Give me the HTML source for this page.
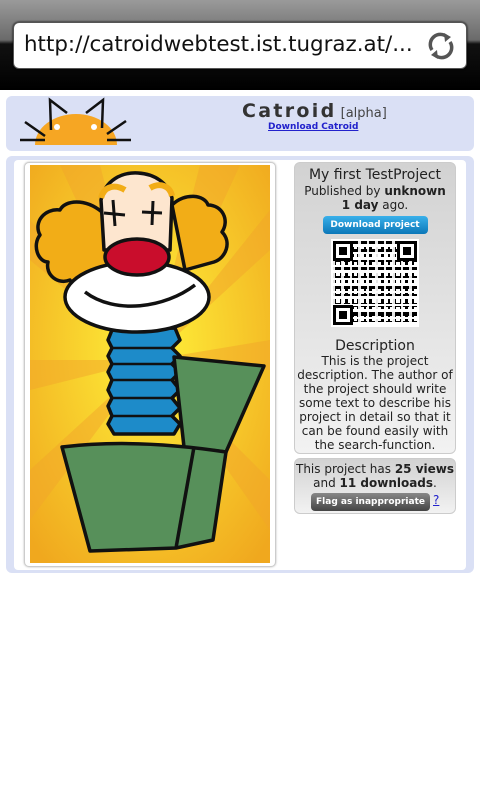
<!DOCTYPE html>
<html><head><meta charset="utf-8"><style>
*{margin:0;padding:0;box-sizing:border-box}
body{width:480px;height:800px;background:#fff;font-family:"DejaVu Sans","Liberation Sans",sans-serif;position:relative;overflow:hidden}
.top{position:absolute;left:0;top:0;width:480px;height:90px;background:linear-gradient(#9a9a9a 0,#6a6a6a 40px,#111 44px,#000 90px)}
.url{position:absolute;left:13px;top:22px;width:454px;height:47px;background:#fff;border:1px solid #555;border-radius:6px;box-shadow:0 0 2px #000}
.url span{position:absolute;left:10px;top:9px;font-size:21.4px;color:#111;font-family:"DejaVu Sans",sans-serif;white-space:nowrap}
.hdr{position:absolute;left:6px;top:96px;width:468px;height:55px;background:#dae0f5;border-radius:6px}
.main{position:absolute;left:6px;top:156px;width:468px;height:417px;background:#dae0f5;border-radius:6px}
.inner{position:absolute;left:14px;top:160px;width:452px;height:410px;background:#fff;border-radius:4px}
.frame{position:absolute;left:24px;top:162px;width:252px;height:405px;border:1px solid #ccc;border-radius:5px;background:#fff;box-shadow:0 0 2px #bbb}
.box{position:absolute;left:294px;width:162px;border:1px solid #ccc;border-radius:6px;background:linear-gradient(#d2d2d2,#f2f2f2);text-align:center;color:#222;font-size:12px;line-height:14px}
b{font-weight:bold}
.btn{display:block;margin:0 auto;border-radius:4px;color:#fff;font-size:9px;font-weight:bold;height:18px;line-height:18px}
.qr{position:absolute;left:331px;top:239px;width:88px;height:88px;background:#fff}
.qrin{position:absolute;left:2px;top:2px;width:84px;height:84px;
background:
repeating-linear-gradient(0deg,#fff 0 3px,transparent 3px 6px,#fff 6px 8px,transparent 8px 13px),
repeating-linear-gradient(90deg,#000 0 3px,transparent 3px 7px,#000 7px 9px,transparent 9px 12px),
repeating-linear-gradient(0deg,#000 0 4px,transparent 4px 9px),
#fff}
.qrin2{position:absolute;inset:0;background:repeating-linear-gradient(90deg,#fff 0 2px,transparent 2px 8px,#fff 8px 11px,transparent 11px 17px);opacity:.9}
.fp{position:absolute;width:20px;height:20px;border:3px solid #000;background:#fff}
.fp::after{content:"";position:absolute;left:3px;top:3px;width:8px;height:8px;background:#000}
</style></head><body>
<div class="top"></div>
<div class="url"><span>http://catroidwebtest.ist.tugraz.at/...</span>
<svg style="position:absolute;left:413px;top:9px" width="28" height="28" viewBox="0 0 28 28"><path d="M5 18 A10 10 0 0 1 20 5" stroke="#555" stroke-width="3.5" fill="none"/><path d="M23 10 A10 10 0 0 1 8 23" stroke="#555" stroke-width="3.5" fill="none"/><path d="M17 1 L24 5 L18 10Z M11 27 L4 23 L10 18Z" fill="#555"/></svg></div>
<div class="hdr"></div>
<svg style="position:absolute;left:0;top:96px" width="140" height="55" viewBox="0 96 140 55">
<path d="M35 145 A41 31 0 0 1 117 145Z" fill="#f6a623"/>
<circle cx="57" cy="127" r="3" fill="#fff"/><circle cx="94" cy="127" r="3" fill="#fff"/>
<path d="M51 130 L50 100 L67 113 M86 113 L103 100 L102 128 M25 122 L45 136 M20 140 L45 140 M126 121 L107 134 M131 140 L107 140" stroke="#111" stroke-width="2.5" fill="none"/>
</svg>
<div style="position:absolute;left:242px;top:100px;font-size:19px;font-weight:bold;letter-spacing:2.3px;color:#333">Catroid<span style="font-size:13px;font-weight:normal;letter-spacing:0;color:#444"> [alpha]</span></div>
<div style="position:absolute;left:268px;top:122px;font-size:9px;font-weight:bold;color:#22c;text-decoration:underline">Download Catroid</div>
<div class="main"></div><div class="inner"></div>
<div class="frame"></div>
<svg style="position:absolute;left:30px;top:165px" width="240" height="398" viewBox="30 165 240 398">
<defs><radialGradient id="g" cx="0.5" cy="0.45" r="0.7"><stop offset="0" stop-color="#fff23a"/><stop offset="1" stop-color="#f0a81e"/></radialGradient></defs>
<rect x="30" y="165" width="240" height="398" fill="url(#g)"/>
<g fill="#f2a52a" opacity=".5"><path d="M150 360 L30 220 L30 260Z M150 360 L270 210 L270 250Z M150 360 L30 470 L30 520Z M150 360 L270 480 L270 530Z M150 360 L60 165 L100 165Z M150 360 L200 165 L240 165Z M150 360 L30 360 L30 390Z M150 360 L270 340 L270 370Z"/></g>
<g stroke="#111" stroke-width="3.5" stroke-linejoin="round">
<path d="M102 212 C85 198 65 200 60 210 C45 208 33 222 40 235 C32 245 38 262 48 262 C45 275 58 285 70 280 C75 290 88 295 98 288 L115 265Z" fill="#f2ad17"/>
<path d="M172 205 C185 192 205 195 208 205 C222 205 230 220 222 232 C232 242 226 258 214 262 L185 270Z" fill="#f2ad17"/>
<path d="M104 250 L101 200 C105 180 122 172 138 173 C155 174 168 183 172 198 L170 250Z" fill="#fde6cf"/>
<path d="M101 198 C104 186 115 184 125 190 M150 188 C160 182 170 186 172 196" fill="none" stroke="#f2ad17" stroke-width="6"/>
<path d="M113 200 L115 226 M104 213 L125 215 M153 201 L152 225 M142 212 L162 213" fill="none" stroke-width="3"/>
<path d="M112 330 L175 328 L180 340 L172 348 L180 356 L172 364 L180 372 L172 380 L180 390 L172 398 L180 408 L172 416 L180 424 L174 434 L114 434 L108 424 L112 416 L108 406 L112 398 L108 390 L112 380 L108 372 L112 364 L108 356 L112 348 L108 340Z" fill="#1d8bc9"/>
<path d="M112 348 L172 348 M112 364 L172 364 M112 380 L172 380 M112 398 L172 398 M112 416 L172 416" stroke-width="2.5"/>
<ellipse cx="137" cy="297" rx="72" ry="35" fill="#fff"/>
<path d="M85 292 C115 315 165 308 195 285" fill="none"/>
<ellipse cx="137" cy="257" rx="32" ry="18" fill="#c90d2c"/>
<path d="M174 357 L264 366 L226 452 L184 447Z" fill="#57905a"/>
<path d="M62 447 C120 440 180 445 226 452 L213 540 L176 548 L90 551Z" fill="#57905a"/>
<path d="M194 447 L176 548" fill="none"/>
</g>
</svg>
<div class="box" style="top:162px;height:292px">
<div style="font-size:14px;margin-top:4px;line-height:17px">My first TestProject</div>
<div>Published by <b>unknown</b><br><b>1 day</b> ago.</div>
<div class="btn" style="width:105px;margin-top:4px;background:linear-gradient(#39b0ea,#0b77b8)">Download project</div>
<div style="height:104px"></div>
<div style="font-size:14px;line-height:16px">Description</div>
<div style="padding:0 2px">This is the project description. The author of the project should write some text to describe his project in detail so that it can be found easily with the search-function.</div>
</div>
<div class="qr"><div class="qrin"><div class="qrin2"></div></div>
<div class="fp" style="left:2px;top:2px"></div><div class="fp" style="left:66px;top:2px"></div><div class="fp" style="left:2px;top:66px"></div></div>
<div class="box" style="top:458px;height:56px">
<div style="margin-top:3px">This project has <b>25 views</b><br>and <b>11 downloads</b>.</div>
<div style="position:relative;margin-top:3px;height:18px"><div class="btn" style="position:absolute;left:16px;width:119px;background:linear-gradient(#888,#444)">Flag as inappropriate</div><span style="position:absolute;left:138px;top:0;color:#22c;text-decoration:underline">?</span></div>
</div>
</body></html>
